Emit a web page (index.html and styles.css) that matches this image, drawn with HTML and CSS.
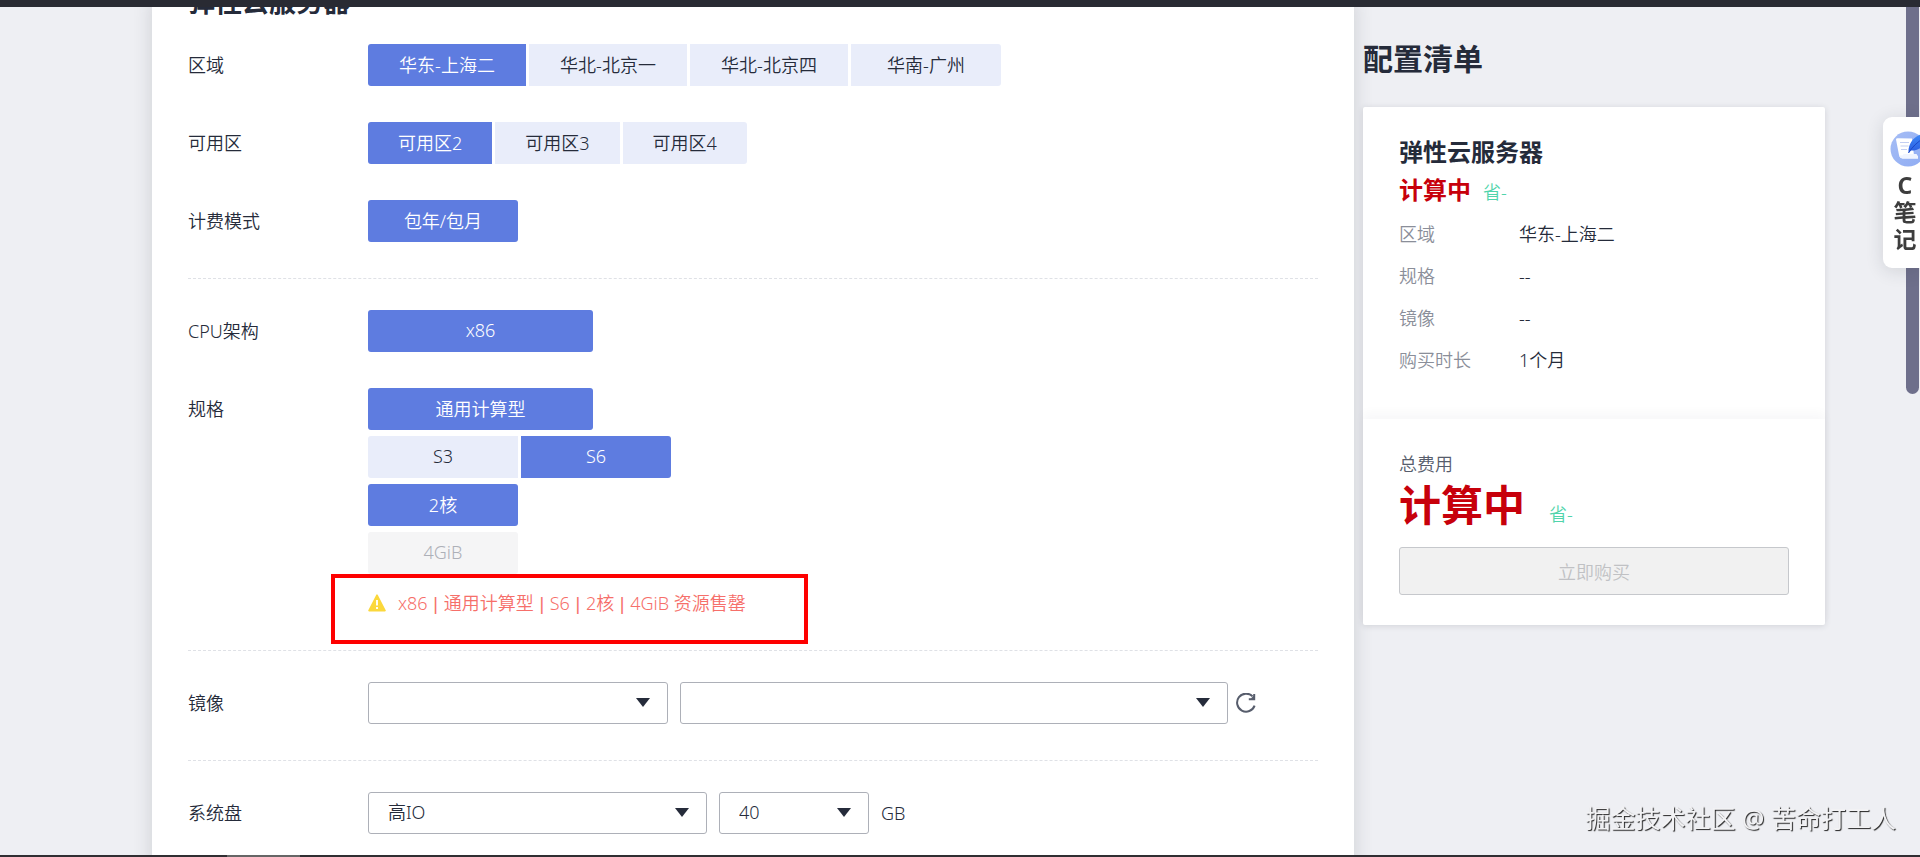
FILE: index.html
```
<!DOCTYPE html>
<html lang="zh-CN">
<head>
    <meta charset="UTF-8">
    <meta name="viewport" content="width=device-width, initial-scale=1.0">
    <title>弹性云服务器</title>
    <link rel="stylesheet" href="styles.css">
</head>
<body>
    <header class="topbar"></header>

    <div class="page">
        <main class="panel">
            <h2 class="panel-title">弹性云服务器</h2>

            <section class="section first">
                <div class="row">
                    <div class="label" id="lblRegion">区域</div>
                    <div class="options" role="group" aria-labelledby="lblRegion">
                        <button class="option region active">华东-上海二</button>
                        <button class="option region">华北-北京一</button>
                        <button class="option region">华北-北京四</button>
                        <button class="option wide">华南-广州</button>
                    </div>
                </div>
                <div class="row">
                    <div class="label" id="lblZone">可用区</div>
                    <div class="options" role="group" aria-labelledby="lblZone">
                        <button class="option active">可用区2</button>
                        <button class="option">可用区3</button>
                        <button class="option">可用区4</button>
                    </div>
                </div>
                <div class="row">
                    <div class="label" id="lblMode">计费模式</div>
                    <div class="options" role="group" aria-labelledby="lblMode">
                        <button class="option wide active">包年/包月</button>
                    </div>
                </div>
            </section>

            <section class="section">
                <div class="row">
                    <div class="label" id="lblCpu">CPU架构</div>
                    <div class="options" role="group" aria-labelledby="lblCpu">
                        <button class="option xwide active">x86</button>
                    </div>
                </div>
                <div class="row">
                    <div class="label" id="lblSpec">规格</div>
                    <div class="stack" role="group" aria-labelledby="lblSpec">
                        <div class="options">
                            <button class="option xwide active">通用计算型</button>
                        </div>
                        <div class="options">
                            <button class="option wide">S3</button>
                            <button class="option wide active">S6</button>
                        </div>
                        <div class="options">
                            <button class="option wide active">2核</button>
                        </div>
                        <div class="options">
                            <button class="option wide" disabled>4GiB</button>
                        </div>
                        <div class="soldout">
                            <svg class="warn-icon" viewBox="0 0 18 18" aria-hidden="true">
                                <path d="M9 1.2 17 16.6H1z" fill="#fbd83c" stroke="#fbd83c" stroke-width="1.6" stroke-linejoin="round"/>
                                <path d="M9 6v5.4M9 13v1.9" stroke="#fff" stroke-width="1.9"/>
                            </svg>
                            <span>x86 <span class="sep">|</span> 通用计算型 <span class="sep">|</span> S6 <span class="sep">|</span> 2核 <span class="sep">|</span> 4GiB 资源售罄</span>
                            <div class="highlight"></div>
                        </div>
                    </div>
                </div>
            </section>

            <section class="section">
                <div class="row">
                    <label class="label" for="imageType">镜像</label>
                    <div class="fields">
                        <div class="select w-type">
                            <select id="imageType"><option></option></select>
                        </div>
                        <div class="select w-image">
                            <select aria-label="镜像版本"><option></option></select>
                        </div>
                        <button class="refresh" aria-label="刷新">
                            <svg viewBox="0 0 20 20" fill="none" stroke="#575d6c" stroke-width="2">
                                <path d="M18.6 12.6A9 9 0 1 1 16.6 3.4"/>
                                <path d="M18.2 1v5.2h-5.4"/>
                                <path d="M14.5 5.8 18 2.5V6z" fill="#575d6c" stroke="none"/>
                            </svg>
                        </button>
                    </div>
                </div>
            </section>

            <section class="section">
                <div class="row">
                    <label class="label" for="diskType">系统盘</label>
                    <div class="fields">
                        <div class="select w-disk">
                            <select id="diskType"><option>高IO</option></select>
                        </div>
                        <div class="select w-size">
                            <select id="diskSize"><option>40</option></select>
                        </div>
                        <label class="unit" for="diskSize">GB</label>
                    </div>
                </div>
            </section>
        </main>

        <aside class="summary">
            <h1 class="summary-title">配置清单</h1>
            <div class="card">
                <div class="card-detail">
                    <h3>弹性云服务器</h3>
                    <div class="price">计算中<span class="save">省-</span></div>
                    <dl>
                        <div><dt>区域</dt><dd>华东-上海二</dd></div>
                        <div><dt>规格</dt><dd>--</dd></div>
                        <div><dt>镜像</dt><dd>--</dd></div>
                        <div><dt>购买时长</dt><dd>1个月</dd></div>
                    </dl>
                </div>
                <div class="card-total">
                    <div class="total-label">总费用</div>
                    <div class="total-price">计算中<span class="save">省-</span></div>
                    <button class="buy" disabled>立即购买</button>
                </div>
            </div>
        </aside>
    </div>

    <div class="scroll-thumb"></div>

    <div class="note-tab">
        <svg viewBox="0 0 36 36" aria-hidden="true">
            <defs>
                <linearGradient id="disc" x1="0" y1="0" x2="1" y2="1">
                    <stop offset="0" stop-color="#a6bdf5"/>
                    <stop offset="1" stop-color="#8facf3"/>
                </linearGradient>
                <linearGradient id="quill" x1="0" y1="0" x2="0" y2="1">
                    <stop offset="0" stop-color="#3f8cf8"/>
                    <stop offset="1" stop-color="#2a5be0"/>
                </linearGradient>
            </defs>
            <circle cx="18" cy="18" r="17.5" fill="url(#disc)"/>
            <path d="M6 8.5Q6 7 8 7.2L22 7.6 24 24.5 28 25V27.5H12.5Q9.5 27 9 24Z" fill="#fff"/>
            <path d="M9 24Q10 27.6 13 27.6H28Q28.5 25 26.5 23H13.5Q13 25.5 9 24Z" fill="#f0f4ff"/>
            <path d="M10 11.5h9M10.5 15h8M11 18.5h6" stroke="#c3cff2" stroke-width="1.2"/>
            <path d="M18.5 22C18 12 24 4 36 2V12C32 17 26 20 21 19.5Z" fill="url(#quill)"/>
            <path d="M18.5 22Q24 13 34 7" stroke="#1c46c4" fill="none"/>
        </svg>
        <span>C</span>
        <span>笔</span>
        <span>记</span>
    </div>

    <div class="watermark">掘金技术社区 @ 苦命打工人</div>
    <footer class="bottombar"><div class="bottombar-item"></div></footer>
</body>
</html>
```
FILE: styles.css
```
* {
    box-sizing: border-box;
}
body {
    margin: 0;
    height: 100vh;
    overflow: hidden;
    background: #eeeff3;
    color: #252b3a;
    font-family: "Noto Sans", "Noto Sans CJK SC", sans-serif;
    font-size: 18px;
    font-weight: 350;
}
h1, h2, h3, dl, dd {
    margin: 0;
}
button, select {
    font: inherit;
    color: inherit;
}
.topbar {
    position: fixed;
    top: 0;
    left: 0;
    right: 0;
    height: 7px;
    background: #292b33;
    z-index: 5;
}
.page {
    display: flex;
    gap: 9px;
    min-height: 100vh;
    padding: 0 95px 0 152px;
}

/* form */
.panel {
    flex: 1;
    padding: 0 36px;
    background: #fff;
    box-shadow: 0 0 18px rgba(37, 43, 58, 0.16);
}
.panel-title {
    margin: -16px 0 24px;
    font-size: 27px;
    line-height: 36px;
    font-weight: 700;
}
.section {
    display: flex;
    flex-direction: column;
    gap: 36px;
    padding: 31px 0 36px;
    border-top: 1px dashed #dfe1e6;
}
.section.first {
    padding-top: 0;
    border-top: 0;
}
.row {
    display: flex;
}
.label {
    width: 180px;
    line-height: 42px;
}
.options {
    display: flex;
    gap: 3px;
}
.stack {
    display: flex;
    flex-direction: column;
    gap: 6px;
}
.option {
    height: 42px;
    padding: 0 30px 2px;
    border: 0;
    background: #e9edfa;
    cursor: pointer;
}
.option:first-child {
    border-radius: 3px 0 0 3px;
}
.option:last-child {
    border-radius: 0 3px 3px 0;
}
.option:only-child {
    border-radius: 3px;
}
.option.region {
    min-width: 158px;
}
.option.wide {
    min-width: 150px;
}
.option.xwide {
    min-width: 225px;
}
.option.active {
    background: #5e7ce0;
    color: #fff;
}
.option:disabled {
    background: #f5f5f6;
    color: #adb0b8;
    cursor: not-allowed;
}
.soldout {
    position: relative;
    display: flex;
    align-items: center;
    gap: 12px;
    height: 22px;
    margin-top: 12px;
    line-height: 22px;
    color: #f66f6a;
}
.sep {
    padding: 0 1px;
    font-family: "Liberation Sans", Arial, sans-serif;
}
.warn-icon {
    width: 18px;
    height: 18px;
}
.highlight {
    position: absolute;
    top: -18px;
    left: -37px;
    width: 477px;
    height: 70px;
    border: 4px solid #fe0000;
}
.fields {
    display: flex;
    align-items: center;
    gap: 12px;
}
.select {
    position: relative;
}
.select select {
    display: block;
    width: 100%;
    height: 42px;
    padding: 0 48px 2px 19px;
    border: 1px solid #adb0b8;
    border-radius: 3px;
    background: #fff;
    appearance: none;
}
.select::after {
    content: "";
    position: absolute;
    top: 16px;
    right: 18px;
    border: 7px solid transparent;
    border-top: 9px solid #252b3a;
    border-bottom: 0;
    pointer-events: none;
}
.w-type {
    width: 300px;
}
.w-image {
    width: 548px;
}
.w-disk {
    width: 339px;
}
.w-size {
    width: 150px;
}
.refresh {
    width: 20px;
    height: 20px;
    margin-left: -4px;
    padding: 0;
    border: 0;
    background: none;
    cursor: pointer;
}
.refresh svg {
    display: block;
}

/* order summary */
.summary {
    width: 462px;
}
.summary-title {
    padding: 35px 0 24px;
    font-size: 30px;
    line-height: 48px;
    font-weight: 700;
}
.card {
    background: #fff;
    border-radius: 2px;
    box-shadow: 0 1px 6px rgba(37, 43, 58, 0.14);
}
.card-detail {
    height: 312px;
    padding: 26px 36px 0;
}
.card-detail h3, .price {
    font-size: 24px;
    line-height: 38px;
    font-weight: 700;
}
.price, .total-price {
    color: #c7000b;
}
.save {
    margin-left: 12px;
    color: #50d4ab;
    font-size: 18px;
    font-weight: 350;
}
.card dl {
    padding-top: 2px;
}
.card dl div {
    display: flex;
    line-height: 42px;
}
.card dt {
    width: 120px;
    color: #8a8e99;
}
.card-total {
    padding: 33px 36px 30px;
    box-shadow: 0 -6px 10px rgba(37, 43, 58, 0.03);
}
.total-label {
    line-height: 24px;
    color: #575d6c;
}
.total-price {
    font-size: 42px;
    line-height: 58px;
    font-weight: 700;
}
.total-price .save {
    margin-left: 24px;
}
.buy {
    display: block;
    width: 100%;
    height: 48px;
    margin-top: 4px;
    border: 1px solid #c6c8cc;
    border-radius: 3px;
    background: #f1f1f1;
    color: #c0c1c4;
}

/* things floating over the page */
.scroll-thumb {
    position: fixed;
    top: 0;
    right: 1px;
    width: 13px;
    height: 394px;
    border-radius: 7px;
    background: #6e6f8b;
}
.note-tab {
    position: fixed;
    top: 117px;
    right: 0;
    display: flex;
    flex-direction: column;
    align-items: center;
    width: 37px;
    height: 151px;
    padding: 14px 0 0 7px;
    border-radius: 9px 0 0 9px;
    background: #fff;
    box-shadow: 0 3px 18px rgba(37, 43, 58, 0.14);
    color: #3d3d3d;
    font-size: 23px;
    line-height: 27px;
    font-weight: 700;
    overflow: hidden;
}
.note-tab svg {
    flex: none;
    align-self: flex-start;
    width: 36px;
    height: 36px;
    margin-bottom: 5px;
}
.watermark {
    position: fixed;
    right: 24px;
    bottom: 21px;
    color: #f2f2f4;
    font-size: 25px;
    line-height: 36px;
    font-weight: 400;
    text-shadow: 1px 1px 1px #222;
}
.bottombar {
    position: fixed;
    left: 0;
    right: 0;
    bottom: 0;
    height: 2px;
    padding-left: 227px;
    background: #302e32;
}
.bottombar-item {
    width: 73px;
    height: 2px;
    background: #666;
}
```
